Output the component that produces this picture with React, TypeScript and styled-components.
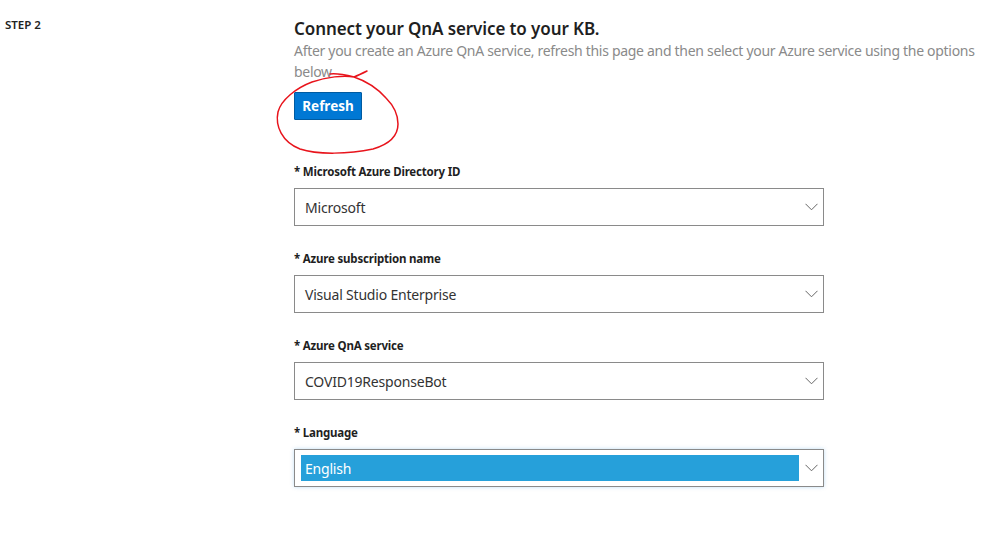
import React from 'react';
import styled, { createGlobalStyle } from 'styled-components';

const GlobalStyle = createGlobalStyle`
  html, body {
    margin: 0;
    padding: 0;
    background: #ffffff;
  }
  body {
    font-family: "Noto Sans", "Open Sans", "Liberation Sans", sans-serif;
    color: #212121;
  }
`;

const Page = styled.div`
  display: flex;
  width: 999px;
  height: 535px;
  overflow: hidden;
`;

const StepColumn = styled.div`
  width: 289px;
  padding: 17px 0 0 5px;
  font-size: 11.5px;
  font-weight: 600;
  color: #222;
`;

const Main = styled.div`
  position: relative;
  width: 700px;
  padding-top: 18px;
`;

const Title = styled.h2`
  margin: 0;
  font-size: 17px;
  line-height: 22px;
  font-weight: 600;
  color: #1f1f1f;
  letter-spacing: -0.1px;
`;

const Subtitle = styled.p`
  margin: 0;
  font-size: 14px;
  line-height: 21px;
  color: #8a8a8a;
  letter-spacing: -0.3px;
  width: 700px;
`;

const RefreshButton = styled.button`
  display: block;
  margin-top: 10px;
  height: 28px;
  width: 68px;
  padding: 0;
  border: 1px solid #005ba1;
  border-radius: 1px;
  background: #0078d4;
  color: #ffffff;
  font-family: inherit;
  font-size: 13.5px;
  font-weight: 700;
  cursor: pointer;
`;

const Field = styled.div<{ $gap: number }>`
  margin-top: ${p => p.$gap}px;
`;

const Label = styled.div`
  font-size: 11.5px;
  line-height: 16px;
  font-weight: 700;
  color: #1f1f1f;
  letter-spacing: -0.2px;
  margin-bottom: 8px;
`;

const SelectBox = styled.div<{ $focused?: boolean }>`
  box-sizing: border-box;
  width: 530px;
  height: 38px;
  border: 1px solid #8a8a8a;
  background: #fff;
  display: flex;
  align-items: center;
  padding: ${p => (p.$focused ? '5px 0 5px 6px' : '0 0 0 10px')};
  box-shadow: ${p => (p.$focused ? '0 0 4px rgba(0, 120, 212, 0.25)' : 'none')};
`;

const Value = styled.div<{ $highlighted?: boolean }>`
  flex: 1;
  height: 100%;
  display: flex;
  align-items: center;
  font-size: 14px;
  letter-spacing: -0.2px;
  padding-left: ${p => (p.$highlighted ? '4px' : '0')};
  color: ${p => (p.$highlighted ? '#ffffff' : '#333333')};
  background: ${p => (p.$highlighted ? '#26a0da' : 'transparent')};
`;

const ChevronWrap = styled.div`
  width: 24px;
  display: flex;
  justify-content: center;
  align-items: center;
`;

const Annotation = styled.svg`
  position: absolute;
  left: -20px;
  top: 50px;
  pointer-events: none;
  overflow: visible;
`;

const Chevron = () => (
  <ChevronWrap>
    <svg width="13" height="8" viewBox="0 0 13 8">
      <path d="M0.5 0.8 L6.5 6.8 L12.5 0.8" fill="none" stroke="#666" strokeWidth="1" />
    </svg>
  </ChevronWrap>
);

const fields = [
  { label: '* Microsoft Azure Directory ID', value: 'Microsoft', gap: 44 },
  { label: '* Azure subscription name', value: 'Visual Studio Enterprise', gap: 25 },
  { label: '* Azure QnA service', value: 'COVID19ResponseBot', gap: 25 },
  { label: '* Language', value: 'English', gap: 25, focused: true },
];

export default function App() {
  return (
    <>
      <GlobalStyle />
      <Page>
        <StepColumn>STEP 2</StepColumn>
        <Main>
          <Title>Connect your QnA service to your KB.</Title>
          <Subtitle>
            After you create an Azure QnA service, refresh this page and then select your Azure
            service using the options below
          </Subtitle>
          <RefreshButton>Refresh</RefreshButton>
          {fields.map(f => (
            <Field key={f.label} $gap={f.gap}>
              <Label>{f.label}</Label>
              <SelectBox $focused={f.focused}>
                <Value $highlighted={f.focused}>{f.value}</Value>
                <Chevron />
              </SelectBox>
            </Field>
          ))}
          {/* hand-drawn red circle around the Refresh button; origin = (274, 50) page coords */}
          <Annotation width="140" height="110" viewBox="0 0 140 110">
            <path
              d="M56 24 C 64 23, 72 25, 80 27 C 85 25, 89 23, 93 21
                 M80 27 C 70 25, 52 27, 38 32 C 22 38, 7 50, 4 62
                 C 1 76, 8 92, 26 99 C 44 105, 75 104, 99 99
                 C 116 94, 124 85, 124 74 C 124 64, 119 55, 112 48
                 C 104 39, 92 31, 80 27"
              fill="none"
              stroke="#e8141c"
              strokeWidth="1.5"
              strokeLinecap="round"
            />
          </Annotation>
        </Main>
      </Page>
    </>
  );
}
